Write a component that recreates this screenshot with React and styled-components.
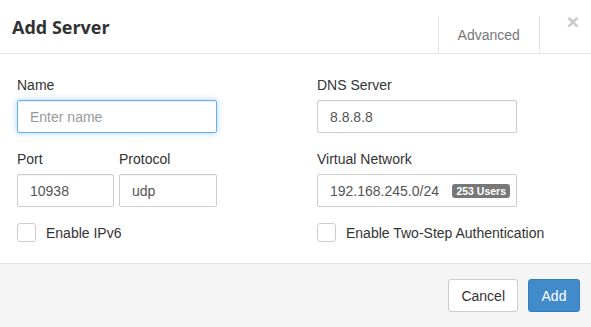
import React from "react";
import styled, { createGlobalStyle } from "styled-components";

const GlobalStyle = createGlobalStyle`
  html, body {
    margin: 0;
    padding: 0;
    background: #fff;
  }
  body {
    font-family: "Liberation Sans", Arial, sans-serif;
    font-size: 14px;
    color: #333;
  }
`;

const Modal = styled.div`
  width: 591px;
  height: 327px;
  background: #fff;
  display: flex;
  flex-direction: column;
`;

const Header = styled.div`
  display: flex;
  height: 53px;
  border-bottom: 1px solid #e5e5e5;
`;

const Title = styled.h4`
  margin: 0;
  padding-left: 12px;
  flex: 1;
  align-self: center;
  font-family: "Open Sans", sans-serif;
  font-weight: 700;
  font-size: 18px;
  color: #333;
`;

const Tab = styled.div`
  align-self: flex-end;
  width: 100px;
  height: 37px;
  border-left: 1px solid #e5e5e5;
  border-right: 1px solid #e5e5e5;
  display: flex;
  align-items: center;
  justify-content: center;
  color: #777;
  font-size: 14px;
`;

const Close = styled.button`
  align-self: flex-start;
  margin: 11px 12px 0 27px;
  padding: 0;
  border: none;
  background: none;
  font-family: "Liberation Sans", Arial, sans-serif;
  font-size: 21px;
  font-weight: 700;
  line-height: 1;
  color: #c8c8c8;
  cursor: pointer;
`;

const Body = styled.div`
  flex: 1;
  padding: 21px 0 0 17px;
  display: grid;
  grid-template-columns: 300px 1fr;
  row-gap: 16px;
  align-content: start;
`;

const Group = styled.div`
  display: flex;
  flex-direction: column;
`;

const Pair = styled.div`
  display: flex;
  gap: 5px;
  width: 200px;
`;

const Label = styled.label`
  line-height: 20px;
  margin-bottom: 5px;
  color: #333;
`;

const Input = styled.input`
  box-sizing: border-box;
  width: ${(p) => p.$width || "200px"};
  height: 33px;
  padding: 0 12px;
  border: 1px solid ${(p) => (p.$focused ? "#66afe9" : "#ccc")};
  border-radius: 2px;
  font-family: "Liberation Sans", Arial, sans-serif;
  font-size: 14px;
  color: #555;
  outline: none;
  box-shadow: ${(p) =>
    p.$focused
      ? "inset 0 1px 1px rgba(0,0,0,.075), 0 0 6px rgba(102,175,233,.55)"
      : "inset 0 1px 1px rgba(0,0,0,.04)"};

  &::placeholder {
    color: #999;
  }
`;

const Field = styled.div`
  box-sizing: border-box;
  width: 200px;
  height: 33px;
  padding: 0 6px 0 12px;
  border: 1px solid #ccc;
  border-radius: 2px;
  display: flex;
  align-items: center;
  justify-content: space-between;
  color: #555;
`;

const Badge = styled.span`
  background: #777;
  color: #fff;
  font-size: 10.5px;
  font-weight: 700;
  line-height: 14px;
  padding: 0 4px;
  border-radius: 3px;
`;

const Check = styled.label`
  display: flex;
  align-items: center;
  gap: 10px;
  height: 19px;
  white-space: nowrap;
  color: #333;
`;

const Box = styled.span`
  box-sizing: border-box;
  flex: none;
  width: 19px;
  height: 19px;
  border: 1px solid #ccc;
  border-radius: 3px;
  background: #fff;
`;

const Footer = styled.div`
  display: flex;
  justify-content: flex-end;
  gap: 10px;
  padding: 15px 11px 15px 0;
  background: #f5f5f5;
  border-top: 1px solid #e5e5e5;
`;

const Button = styled.button`
  box-sizing: border-box;
  height: 33px;
  padding: 0 12px;
  border-radius: 3px;
  font-family: "Liberation Sans", Arial, sans-serif;
  font-size: 14px;
  cursor: pointer;
  border: 1px solid ${(p) => (p.$primary ? "#357ebd" : "#ccc")};
  background: ${(p) => (p.$primary ? "#428bca" : "#fff")};
  color: ${(p) => (p.$primary ? "#fff" : "#333")};
  min-width: ${(p) => (p.$primary ? "52px" : "68px")};
`;

export default function App() {
  return (
    <>
      <GlobalStyle />
      <Modal>
        <Header>
          <Title>Add Server</Title>
          <Tab>Advanced</Tab>
          <Close aria-label="Close">×</Close>
        </Header>
        <Body>
          <Group>
            <Label>Name</Label>
            <Input $focused placeholder="Enter name" />
          </Group>
          <Group>
            <Label>DNS Server</Label>
            <Input defaultValue="8.8.8.8" />
          </Group>
          <Pair>
            <Group>
              <Label>Port</Label>
              <Input $width="97px" defaultValue="10938" />
            </Group>
            <Group>
              <Label>Protocol</Label>
              <Input $width="98px" defaultValue="udp" />
            </Group>
          </Pair>
          <Group>
            <Label>Virtual Network</Label>
            <Field>
              <span>192.168.245.0/24</span>
              <Badge>253 Users</Badge>
            </Field>
          </Group>
          <Check>
            <Box />
            Enable IPv6
          </Check>
          <Check>
            <Box />
            Enable Two-Step Authentication
          </Check>
        </Body>
        <Footer>
          <Button>Cancel</Button>
          <Button $primary>Add</Button>
        </Footer>
      </Modal>
    </>
  );
}
